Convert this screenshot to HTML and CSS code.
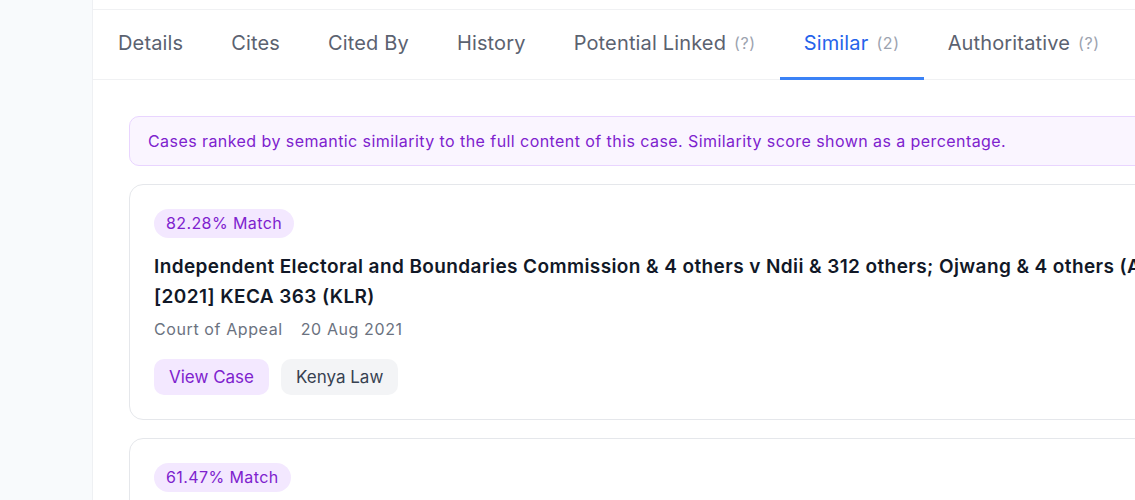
FILE: index.html
```html
<!DOCTYPE html>
<html lang="en">
<head>
	<meta charset="UTF-8">
	<title>Similar cases</title>
	<link rel="stylesheet" href="styles.css">
</head>
<body>
	<div class="app">
		<aside class="sidebar"></aside>
		<main class="main">
			<div class="topbar"></div>
			<nav class="tabs">
				<a class="tab">Details</a>
				<a class="tab">Cites</a>
				<a class="tab">Cited By</a>
				<a class="tab">History</a>
				<a class="tab">Potential Linked <span class="count">(?)</span></a>
				<a class="tab active">Similar <span class="count">(2)</span></a>
				<a class="tab">Authoritative <span class="count">(?)</span></a>
			</nav>
			<section class="content">
				<div class="notice">Cases ranked by semantic similarity to the full content of this case. Similarity score shown as a percentage.</div>

				<div class="card">
					<span class="match">82.28% Match</span>
					<h3 class="case-title">Independent Electoral and Boundaries Commission &amp; 4 others v Ndii &amp; 312 others; Ojwang &amp; 4 others (Amicus Curiae) [2021] KECA 363 (KLR)</h3>
					<div class="meta">
						<span>Court of Appeal</span>
						<span>20 Aug 2021</span>
					</div>
					<div class="actions">
						<a class="btn btn-view">View Case</a>
						<a class="btn btn-source">Kenya Law</a>
					</div>
				</div>

				<div class="card">
					<span class="match">61.47% Match</span>
					<h3 class="case-title">Attorney General &amp; 2 others v Ndii &amp; 79 others; Prof. Rosalind Dixon &amp; 7 others (Amicus Curiae) [2022] KESC 8 (KLR)</h3>
					<div class="meta">
						<span>Supreme Court</span>
						<span>31 Mar 2022</span>
					</div>
					<div class="actions">
						<a class="btn btn-view">View Case</a>
						<a class="btn btn-source">Kenya Law</a>
					</div>
				</div>
			</section>
		</main>
	</div>
</body>
</html>
```

FILE: styles.css
```css
*{
	padding: 0;
	margin: 0;
	box-sizing: border-box;
}
body{
	font-family: Inter, "Noto Sans", sans-serif;
	background: #fff;
	overflow: hidden;
	color: #111827;
}
.app{
	display: flex;
	width: 1345px;
	min-height: 100vh;
}
.sidebar{
	width: 93px;
	flex: none;
	background: #f8fafc;
	border-right: 1px solid #eef0f3;
}
.main{
	flex: 1;
	min-width: 0;
}
.topbar{
	height: 10px;
	border-bottom: 1px solid #f0f1f3;
}
.tabs{
	display: flex;
	height: 70px;
	padding-left: 1px;
	border-bottom: 1px solid #f0f1f3;
}
.tab{
	display: flex;
	align-items: center;
	gap: 8px;
	padding: 0 24px 1px;
	font-size: 20px;
	letter-spacing: 0.15px;
	color: #5b6270;
	border-bottom: 3px solid transparent;
	margin-bottom: -1px;
	cursor: pointer;
}
.tab .count{
	font-size: 16px;
	letter-spacing: 0.6px;
	color: #9ca3af;
}
.tab.active{
	color: #2563eb;
	border-bottom-color: #3b82f6;
}
.content{
	padding: 36px 36px 0;
	display: flex;
	flex-direction: column;
	gap: 18px;
}
.notice{
	background: #faf5ff;
	border: 1px solid #e9d5ff;
	border-radius: 10px;
	padding: 12px 18px;
	font-size: 16px;
	letter-spacing: 0.43px;
	line-height: 24px;
	color: #7e22ce;
}
.card{
	border: 1px solid #e5e7eb;
	border-radius: 14px;
	padding: 24px;
	display: flex;
	flex-direction: column;
	align-items: flex-start;
}
.match{
	display: inline-block;
	background: #f3e8ff;
	color: #7e22ce;
	font-size: 16px;
	letter-spacing: 0.4px;
	line-height: 29px;
	padding: 0 12px;
	border-radius: 15px;
}
.case-title{
	margin-top: 14px;
	font-size: 19px;
	font-weight: 600;
	letter-spacing: 0.4px;
	line-height: 30px;
	color: #111827;
}
.meta{
	display: flex;
	gap: 18px;
	margin-top: 5px;
	font-size: 16px;
	letter-spacing: 0.6px;
	line-height: 24px;
	color: #6b7280;
}
.actions{
	display: flex;
	gap: 12px;
	margin-top: 18px;
}
.btn{
	display: inline-block;
	height: 36px;
	line-height: 36px;
	padding: 0 15px;
	border-radius: 10px;
	font-size: 17px;
	cursor: pointer;
}
.btn-view{
	background: #f3e8ff;
	color: #7e22ce;
}
.btn-source{
	background: #f3f4f6;
	color: #374151;
}
```
